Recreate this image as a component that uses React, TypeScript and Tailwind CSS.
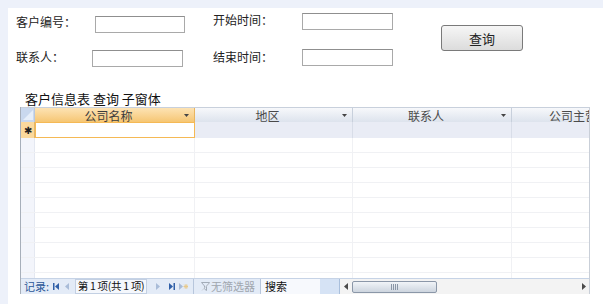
import React from "react";

const font = { fontFamily: '"Noto Sans CJK SC", "Noto Sans", sans-serif' };

function Arrow() {
  return (
    <svg width="5" height="3" viewBox="0 0 5 3" className="absolute right-[5px] top-[6px]">
      <path d="M0 0 H5 L2.5 3 Z" fill="#444" />
    </svg>
  );
}

function HeaderCell({ w, label, active }: { w: number; label: string; active?: boolean }) {
  return (
    <div
      className={
        "relative flex h-full shrink-0 items-center justify-center overflow-hidden border-r pr-[12px] text-[12px] leading-[13px] " +
        (active
          ? "border-[#e9b55f] bg-linear-to-b from-[#fde3b4] to-[#f6c672] text-[#3d3d3d]"
          : "border-[#c8d0dc] bg-linear-to-b from-[#f7f8fb] to-[#dde3ed] text-[#4a4a4a]")
      }
      style={{ width: w }}
    >
      <span>{label}</span>
      <Arrow />
    </div>
  );
}

function NavIcon({ kind, color }: { kind: "first" | "prev" | "next" | "last" | "new"; color: string }) {
  if (kind === "first")
    return (
      <svg width="6" height="7" viewBox="0 0 6 7">
        <rect x="0" y="0" width="1.5" height="7" fill={color} />
        <path d="M6 0 V7 L2 3.5 Z" fill={color} />
      </svg>
    );
  if (kind === "prev")
    return (
      <svg width="4" height="7" viewBox="0 0 4 7">
        <path d="M4 0 V7 L0 3.5 Z" fill={color} />
      </svg>
    );
  if (kind === "next")
    return (
      <svg width="4" height="7" viewBox="0 0 4 7">
        <path d="M0 0 V7 L4 3.5 Z" fill={color} />
      </svg>
    );
  if (kind === "last")
    return (
      <svg width="6" height="7" viewBox="0 0 6 7">
        <path d="M0 0 V7 L4 3.5 Z" fill={color} />
        <rect x="4.5" y="0" width="1.5" height="7" fill={color} />
      </svg>
    );
  return (
    <svg width="9" height="7" viewBox="0 0 9 7">
      <path d="M0 0 V7 L4 3.5 Z" fill={color} />
      <path d="M7 1 V6 M4.5 3.5 H9.5 M5.3 1.7 L8.7 5.3 M8.7 1.7 L5.3 5.3" stroke="#e8c98a" strokeWidth="1" />
    </svg>
  );
}

export default function App() {
  const bodyRows = Array.from({ length: 10 });
  return (
    <div className="flex h-[304px] w-[603px] flex-col bg-[#edf1fa] pl-2 pt-2 text-[#222]" style={font}>
      <div className="flex flex-1 flex-col overflow-hidden bg-white">
        {/* form */}
        <div className="flex">
          <div className="flex flex-col pl-2">
            <div className="flex h-[34px] items-start">
              <div className="mt-[6px] w-[79px] text-[12px] leading-[16px]">客户编号：</div>
              <div className="mt-2 h-[17px] w-[90px] border border-[#a9a9a9] border-t-[#8f8f8f] bg-white" />
              <div className="ml-[28px] mt-[4px] w-[89px] text-[12px] leading-[16px]">开始时间：</div>
              <div className="mt-[5px] h-[17px] w-[91px] border border-[#a9a9a9] border-t-[#8f8f8f] bg-white" />
            </div>
            <div className="flex h-[30px] items-start">
              <div className="mt-[7px] w-[76px] text-[12px] leading-[16px]">联系人：</div>
              <div className="mt-2 h-[17px] w-[91px] border border-[#a9a9a9] border-t-[#8f8f8f] bg-white" />
              <div className="ml-[30px] mt-[7px] w-[89px] text-[12px] leading-[16px]">结束时间：</div>
              <div className="mt-[7px] h-[17px] w-[91px] border border-[#a9a9a9] border-t-[#8f8f8f] bg-white" />
            </div>
          </div>
          <div className="ml-[48px] mt-[17px] flex h-[26px] w-[82px] items-center justify-center rounded-[3px] border border-[#7a7a7a] bg-linear-to-b from-[#f6f6f6] to-[#dcdcdc] text-[13px] leading-none text-[#222]">
            查询
          </div>
        </div>

        {/* caption */}
        <div className="ml-[17px] mt-[20px] whitespace-pre text-[13px] leading-[14px] text-[#111]">客户信息表 查询 子窗体</div>

        {/* datasheet */}
        <div className="ml-[12px] mt-[1px] flex h-[187px] w-[570px] flex-col overflow-hidden border-l border-r border-[#a7afba] border-r-[#c9cfd8]">
          {/* header */}
          <div className="flex h-[15px] shrink-0 border-t border-[#c8d0dc]">
            <div className="relative h-full w-[14px] shrink-0 border-r border-[#b9c7dc] bg-[#c9d8ee]">
              <svg width="14" height="14" viewBox="0 0 14 14" className="absolute left-0 top-0">
                <path d="M12 2 V12 H2 Z" fill="#e6eef9" />
              </svg>
            </div>
            <HeaderCell w={160} label="公司名称" active />
            <HeaderCell w={158} label="地区" />
            <HeaderCell w={159} label="联系人" />
            <div className="flex h-full flex-1 items-center overflow-hidden bg-linear-to-b from-[#f7f8fb] to-[#dde3ed] pl-[37px] text-[12px] leading-[13px] text-[#4a4a4a]">
              <span className="whitespace-nowrap">公司主营业务</span>
            </div>
          </div>
          {/* new record row */}
          <div className="flex h-[16px] shrink-0">
            <div className="flex h-full w-[14px] shrink-0 items-center justify-center border-r border-[#e2b76c] bg-[#fbd99d] text-[10px] leading-none text-[#222]">
              ✱
            </div>
            <div className="h-full w-[160px] shrink-0 border-[1.5px] border-[#f5b955] bg-white" />
            <div className="h-full w-[158px] shrink-0 border-r border-[#d8dde8] bg-[#e9ecf5]" />
            <div className="h-full w-[159px] shrink-0 border-r border-[#d8dde8] bg-[#e9ecf5]" />
            <div className="h-full flex-1 bg-[#e9ecf5]" />
          </div>
          {/* body */}
          <div className="flex flex-1 flex-col overflow-hidden">
            {bodyRows.map((_, i) => (
              <div key={i} className="flex h-[15px] shrink-0 border-b border-[#f0f1f4]">
                <div className="h-full w-[14px] shrink-0 border-r border-[#e4e8f1] bg-[#f3f5fb]" />
                <div className="h-full w-[160px] shrink-0 border-r border-[#f0f1f4]" />
                <div className="h-full w-[158px] shrink-0 border-r border-[#f0f1f4]" />
                <div className="h-full w-[159px] shrink-0 border-r border-[#f0f1f4]" />
                <div className="h-full flex-1" />
              </div>
            ))}
          </div>
          {/* navigation bar */}
          <div className="flex h-[16px] shrink-0 items-center border-t border-[#c6d3e6] bg-[#e3ebf7] text-[11px] leading-none">
            <span className="ml-[3px] text-[#2b5797]">记录:</span>
            <span className="ml-[4px] flex items-center">
              <NavIcon kind="first" color="#2f5fa8" />
            </span>
            <span className="ml-[6px] flex items-center">
              <NavIcon kind="prev" color="#a9bcd8" />
            </span>
            <div className="ml-[6px] flex h-[15px] w-[72px] shrink-0 items-center justify-center overflow-hidden whitespace-nowrap border border-[#c3d0e3] bg-[#f4f7fc] text-[10.5px] tracking-[-0.3px] text-[#111]">
              第 1 项(共 1 项)
            </div>
            <span className="ml-[9px] flex items-center">
              <NavIcon kind="next" color="#a9bcd8" />
            </span>
            <span className="ml-[9px] flex items-center">
              <NavIcon kind="last" color="#2f5fa8" />
            </span>
            <span className="ml-[4px] flex items-center">
              <NavIcon kind="new" color="#a9bcd8" />
            </span>
            <div className="ml-[5px] h-full w-px bg-[#b7c6dc]" />
            <span className="ml-[7px] flex items-center">
              <svg width="9" height="9" viewBox="0 0 9 9">
                <path d="M0.5 0.5 H8.5 L5.5 4 V8.5 L3.5 7 V4 Z" fill="none" stroke="#a3acb8" strokeWidth="1" />
                <path d="M1 8.5 L8.5 1" stroke="#c8ced7" strokeWidth="1" />
              </svg>
            </span>
            <span className="ml-[1px] whitespace-nowrap text-[#a0a6ae]">无筛选器</span>
            <div className="ml-[5px] h-full w-px bg-[#b7c6dc]" />
            <div className="flex h-full w-[79px] shrink-0 items-center border-r border-[#a9bfdc]">
              <div className="flex h-full w-[59px] items-center bg-[#f7f9fd] pl-[4px] text-[#111]">搜索</div>
              <div className="h-full flex-1 bg-[#d6e3f5]" />
            </div>
            {/* scrollbar */}
            <div className="flex h-full flex-1 items-center bg-[#f3f3f3]">
              <span className="ml-[4px] flex items-center">
                <svg width="4" height="7" viewBox="0 0 4 7">
                  <path d="M4 0 V7 L0 3.5 Z" fill="#4a4a4a" />
                </svg>
              </span>
              <div className="ml-[4px] flex h-[12px] w-[85px] items-center justify-center rounded-[2px] border border-[#8b97a8] bg-linear-to-b from-[#f1f4f8] to-[#cdd5df]">
                <svg width="7" height="6" viewBox="0 0 7 6">
                  <path d="M0.5 0 V6 M2.5 0 V6 M4.5 0 V6 M6.5 0 V6" stroke="#8a96a6" strokeWidth="1" />
                </svg>
              </div>
              <div className="flex-1" />
              <span className="mr-[3px] flex items-center">
                <svg width="4" height="7" viewBox="0 0 4 7">
                  <path d="M0 0 V7 L4 3.5 Z" fill="#4a4a4a" />
                </svg>
              </span>
            </div>
          </div>
        </div>
      </div>
    </div>
  );
}
